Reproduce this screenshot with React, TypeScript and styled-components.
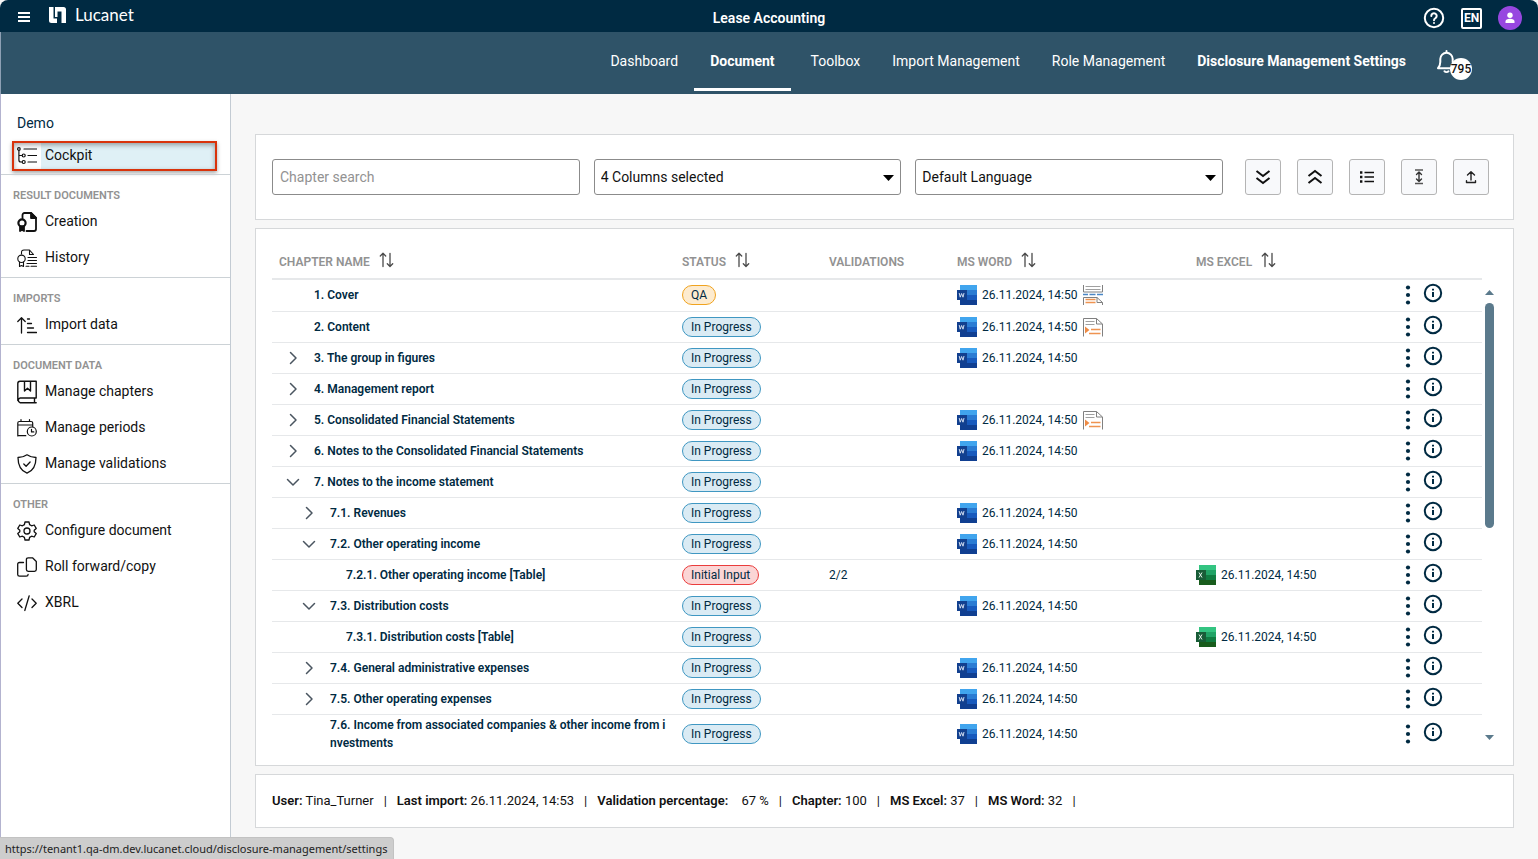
import React from "react";
import styled, { createGlobalStyle } from "styled-components";

const font = `Roboto, "Liberation Sans", sans-serif`;
const navy = "#002a42";

const GlobalStyle = createGlobalStyle`
  *, *::before, *::after { box-sizing: border-box; }
  body { margin: 0; background: #f7f7f7; font-family: ${font}; font-size: 14px; line-height: 20px; color: #111; }
  button, input, select { font: inherit; color: inherit; }
  button { cursor: pointer; padding: 0; border: 0; background: none; }
  svg { display: block; flex: none; }
`;

const Page = styled.div`
  min-height: 100vh;
  display: flex;
  flex-direction: column;
`;

const TopBar = styled.header`
  height: 32px;
  flex: none;
  display: grid;
  grid-template-columns: 1fr auto 1fr;
  align-items: center;
  padding: 0 16px;
  background: ${navy};
  color: #fff;
  border-radius: 8px 8px 0 0;
`;

const Brand = styled.div`
  display: flex;
  align-items: center;
  gap: 16px;
  button { padding-top: 2px; }
`;

const Wordmark = styled.a`
  display: flex;
  align-items: center;
  gap: 9px;
  padding-bottom: 2px;
  color: #fff;
  text-decoration: none;
  font-family: Lato, ${font};
  font-size: 17px;
`;

const AppTitle = styled.h1`
  margin: 0;
  padding-top: 4px;
  font-size: 14px;
  font-weight: 600;
`;

const TopActions = styled.div`
  display: flex;
  justify-content: flex-end;
  align-items: center;
  gap: 16px;
  padding-top: 4px;
`;

const IconButton = styled.button`
  display: flex;
  align-items: center;
  justify-content: center;
`;

const Language = styled.button`
  display: flex;
  align-items: center;
  justify-content: center;
  width: 21px;
  height: 21px;
  border: 2px solid #fff;
  border-radius: 2px;
  font-size: 12px;
  line-height: 17px;
  font-weight: 700;
`;

const Avatar = styled.button`
  display: flex;
  align-items: center;
  justify-content: center;
  width: 24px;
  height: 24px;
  border-radius: 50%;
  background: #9747e0;
`;

const NavBar = styled.nav`
  height: 62px;
  flex: none;
  display: flex;
  justify-content: flex-end;
  padding-right: 66px;
  background: #2f5368;
  border-left: 1px solid #8ea0b4;
`;

const NavLink = styled.a<{ $active?: boolean; $strong?: boolean }>`
  height: 59px;
  padding: 19px 16px 0;
  margin-right: ${(p) => (p.$active ? "4px" : "0")};
  color: #fff;
  text-decoration: none;
  font-weight: ${(p) => (p.$active || p.$strong ? 700 : 400)};
  border-bottom: 3px solid ${(p) => (p.$active ? "#fff" : "transparent")};
`;

const Bell = styled.button`
  position: relative;
  width: 36px;
  margin-left: 14px;
  color: #fff;
  svg { position: absolute; left: 0; top: 18px; }
`;

const BellCount = styled.span`
  position: absolute;
  right: 0;
  top: 26px;
  width: 22px;
  height: 22px;
  border-radius: 50%;
  background: #fff;
  color: #111;
  font-size: 12px;
  line-height: 22px;
  font-weight: 500;
  display: flex;
  justify-content: center;
`;

const Body = styled.div`
  flex: 1;
  display: flex;
`;

const Sidebar = styled.aside`
  width: 231px;
  flex: none;
  background: #fff;
  border-left: 1px solid #b3b3cf;
  border-right: 1px solid #c3cbd3;
`;

const Tenant = styled.div`
  padding: 19px 16px 8px;
  color: ${navy};
`;

const CockpitLink = styled.a`
  display: flex;
  align-items: center;
  height: 30px;
  margin: 0 13px 3px 11px;
  border: 2px solid #d9330b;
  color: #111;
  text-decoration: none;
  box-shadow: 0 2px 4px rgba(0, 0, 0, 0.35), inset 0 2px 5px rgba(0, 0, 0, 0.35);
  background: linear-gradient(to right, #fff 27px, #dff0f6 27px);
  gap: 8px;
  padding: 0 3px;
  span { padding-bottom: 2px; }
`;

const Section = styled.section`
  border-top: 1px solid #ccd2d6;
  padding-bottom: 1px;
`;

const SectionTitle = styled.h2`
  margin: 0;
  padding: 14px 12px 1px;
  font-size: 11px;
  line-height: 14px;
  font-weight: 600;
  color: #929292;
`;

const SideLink = styled.a`
  display: flex;
  align-items: center;
  gap: 8px;
  height: 36px;
  padding: 0 16px;
  color: #111;
  text-decoration: none;
  span { padding-bottom: 2px; }
`;

const Main = styled.main`
  flex: 1;
  min-width: 0;
  display: flex;
  flex-direction: column;
  gap: 8px;
  padding: 40px 24px 32px;
`;

const Panel = styled.section`
  background: #fff;
  border: 1px solid #d6d8da;
`;

const Filters = styled(Panel)`
  display: flex;
  gap: 14px;
  padding: 24px 24px 24px 16px;
`;

const Field = styled.div`
  position: relative;
  flex: 1;
  min-width: 0;
  svg { position: absolute; right: 7px; top: 16px; pointer-events: none; }
`;

const SearchInput = styled.input`
  display: block;
  width: 100%;
  height: 36px;
  padding: 0 7px;
  border: 1px solid #8b8b8b;
  border-radius: 3px;
  background: #fff;
  &::placeholder { color: #929292; opacity: 1; }
`;

const Select = styled.select`
  appearance: none;
  display: block;
  width: 100%;
  height: 36px;
  padding: 0 24px 0 6px;
  border: 1px solid #8b8b8b;
  border-radius: 3px;
  background: #fff;
`;

const Tools = styled.div`
  display: flex;
  gap: 16px;
  margin-left: 8px;
`;

const ToolButton = styled.button`
  display: flex;
  align-items: center;
  justify-content: center;
  width: 36px;
  height: 36px;
  border: 1px solid #b4b4b4;
  border-radius: 3px;
  background: #f8f9fb;
`;

const TablePanel = styled(Panel)`
  display: flex;
  padding: 16px 16px 13px;
`;

const Table = styled.table`
  flex: 1;
  width: 100%;
  min-width: 0;
  table-layout: fixed;
  border-collapse: separate;
  border-spacing: 0;
  font-size: 12px;
  line-height: 18px;
  color: ${navy};
`;

const Col = styled.col<{ $width?: string }>`
  width: ${(p) => p.$width ?? "auto"};
`;

const Th = styled.th`
  height: 35px;
  padding: 0 7px;
  border-bottom: 2px solid #e6e8ea;
  text-align: left;
  font-weight: 600;
  color: #929292;
`;

const HeadLabel = styled.div`
  display: flex;
  align-items: center;
  gap: 9px;
  height: 33px;
  padding-bottom: 4px;
  span { padding-top: 4px; }
`;

const Td = styled.td`
  height: 31px;
  padding: 0 7px;
  border-bottom: 1px solid #e6e8ea;
  vertical-align: middle;
`;

const Row = styled.tr`
  &:first-child td { height: 32px; padding-bottom: 1px; }
  &:last-child td { border-bottom: 0; height: 37px; }
`;

const NameCell = styled.div<{ $level: number }>`
  display: flex;
  align-items: center;
  gap: 8px;
  padding-left: ${(p) => 1 + p.$level * 16}px;
  font-weight: 600;
  word-break: break-all;
`;

const Toggle = styled.span`
  display: flex;
  justify-content: center;
  width: 26px;
  flex: none;
  button { display: block; }
`;

type Status = "QA" | "In Progress" | "Initial Input";

const pillColors: Record<Status, [string, string]> = {
  QA: ["#fdebcf", "#f0a31f"],
  "In Progress": ["#daebf4", "#3f97c2"],
  "Initial Input": ["#fbd5d5", "#ea3c3c"],
};

const Pill = styled.span<{ $status: Status }>`
  display: block;
  width: fit-content;
  height: 20px;
  padding: 0 8px;
  border: 1px solid ${(p) => pillColors[p.$status][1]};
  border-radius: 10px;
  background: ${(p) => pillColors[p.$status][0]};
`;

const FileCell = styled.div`
  display: flex;
  align-items: center;
  gap: 5px;
  white-space: nowrap;
`;

const RowActions = styled.div`
  display: flex;
  align-items: center;
  gap: 12px;
  button:last-child { padding-bottom: 4px; }
`;

const Scrollbar = styled.div`
  width: 15px;
  flex: none;
  display: flex;
  flex-direction: column;
  align-items: center;
  padding: 45px 0 12px;
`;

const Track = styled.div`
  flex: 1;
  width: 9px;
  margin: 8px 0;
`;

const Thumb = styled.div`
  height: 53%;
  border-radius: 5px;
  background: #5b7a8c;
`;

const Summary = styled(Panel)`
  display: flex;
  padding: 16px;
  gap: 10px;
  font-size: 13px;
  b { font-weight: 600; }
`;

const WideLabel = styled.b`
  margin-right: 10px;
`;

const UrlHint = styled.div`
  position: fixed;
  left: 0;
  bottom: 0;
  height: 22px;
  padding: 0 6px 0 5px;
  background: #cdcdcd;
  border-top: 1px solid #c2c2c2;
  border-right: 1px solid #c2c2c2;
  border-radius: 0 4px 0 0;
  font-family: "Noto Sans", sans-serif;
  font-size: 11px;
  line-height: 21px;
  color: #222;
`;

type SvgProps = { w?: number; h?: number; sw?: number; children: React.ReactNode };

const Svg = ({ w = 20, h = 20, sw = 1, children }: SvgProps) => (
  <svg
    width={w}
    height={h}
    viewBox={`0 0 ${w} ${h}`}
    fill="none"
    stroke="currentColor"
    strokeWidth={sw}
    strokeLinecap="round"
    strokeLinejoin="round"
    aria-hidden="true"
  >
    {children}
  </svg>
);

const MenuIcon = () => (
  <Svg w={16} h={16} sw={2}>
    <path d="M2 4h12M2 8h12M2 12h12" strokeLinecap="butt" />
  </Svg>
);

const LogoMark = () => (
  <svg width="18" height="16" viewBox="0 0 18 16" fill="#fff" aria-hidden="true">
    <path d="M1 0h4.500v11.500H9V16H3.500A2.500 2.500 0 0 1 1 13.500z" />
    <path d="M7 0h8.500A2.500 2.500 0 0 1 18 2.500V16h-4.500V4.500H9.500V10H7z" />
  </svg>
);

const HelpIcon = () => (
  <Svg w={22} h={22} sw={2}>
    <circle cx="11" cy="11" r="9.2" />
    <path d="M8.300 9a2.700 2.700 0 1 1 4.200 2.200c-1 .7-1.500 1-1.500 2" />
    <path d="M11 16v.1" />
  </Svg>
);

const PersonIcon = () => (
  <svg width="12" height="12" viewBox="0 0 12 12" fill="#fff" aria-hidden="true">
    <circle cx="6" cy="3.2" r="2.7" />
    <path d="M1.5 11V9.6C1.5 7.8 3.4 6.8 6 6.8s4.5 1 4.5 2.8V11z" />
  </svg>
);

const BellIcon = () => (
  <Svg w={22} h={24} sw={2}>
    <path d="M10.5 1v1.500M2 18.200c1.600-1.800 2.300-3.200 2.300-6.200V9a6.200 6.200 0 0 1 12.400 0v3c0 3 .7 4.400 2.300 6.200z" />
    <path d="M8.500 21.300c1 1 3 1 4 0" />
  </Svg>
);

const TreeIcon = () => (
  <Svg sw={1.2}>
    <circle cx="1.9" cy="3" r="1.3" />
    <circle cx="6.7" cy="9.5" r="1.5" />
    <circle cx="6.7" cy="16" r="1.5" />
    <path d="M1.900 4.500V14c0 1.400.6 2 2 2h1M1.900 9.500h3M7 3h12.500M11 9.500h8.500M11 16h8.500" />
  </Svg>
);

const CreationIcon = () => (
  <Svg sw={1.8}>
    <path d="M5.500 6V3c0-1.200.8-2 2-2h6.500l5 5v11c0 1.200-.8 2-2 2H9.500" />
    <path d="M14 1l5 5h-5z" fill="currentColor" />
    <circle cx="5" cy="11" r="3.6" strokeWidth="2.2" />
    <path d="M3 14.500h4V19l-2-1.300L3 19z" fill="currentColor" />
  </Svg>
);

const HistoryIcon = () => (
  <Svg sw={1.1}>
    <path d="M4.500 6V4.500c0-1.800.7-2.500 2.500-2.500h5.500l4 4.500h-4V2" />
    <circle cx="4.5" cy="10.8" r="3.7" />
    <path d="M2.500 14v4.500l2-1 2 1V14M11 9.500h8.500M11 12.500h8.500M10 15.500h9.500M9 18.200h3M14 18.200h5.500" />
  </Svg>
);

const ImportIcon = () => (
  <Svg sw={1.3}>
    <path d="M4.500 18V3M.8 6.500L4.500 2.800l3.700 3.700M10.500 4h2M10.500 8.500h4M10.500 13h6M10.500 17.500h9" />
  </Svg>
);

const BookIcon = () => (
  <Svg w={20} h={24} sw={1.4}>
    <path d="M.8 20.500V3.500c0-1.500.7-2.200 2.200-2.200h16.200V18H3.200a2.400 2.400 0 0 0 0 4.700h16M17.500 18.200v4.300M7.500 1.500v9.500l3-2.800 3 2.800V1.500" />
  </Svg>
);

const CalendarIcon = () => (
  <Svg sw={1.2}>
    <path d="M.8 18V5c0-1 .5-1.500 1.500-1.500h11.900c1 0 1.500.5 1.500 1.500v3.500M.8 7h15M4 3.500v-2M12.500 3.500v-2M.8 17.700h8" />
    <circle cx="14.8" cy="13.500" r="4.5" />
    <path d="M14.500 11.300v2.600h2.300" />
  </Svg>
);

const ShieldIcon = () => (
  <Svg sw={1.3}>
    <path d="M10 .8c2.800 2 5.500 2.700 9 2.700 0 7.500-2 13-9 15.700C3 16.500 1 11 1 3.500 4.500 3.500 7.200 2.800 10 .8z" />
    <path d="M6.800 10l2.300 2.200 4-4.200" />
  </Svg>
);

const GearIcon = () => (
  <Svg sw={1.3}>
    <circle cx="10" cy="10" r="3" />
    <path d="M8 1h4l.6 2.600 2 1.200 2.600-.8 2 3.400-2 1.800v1.600l2 1.800-2 3.400-2.600-.8-2 1.200L12 19H8l-.6-2.600-2-1.200-2.600.8-2-3.400 2-1.800V9.200l-2-1.800 2-3.400 2.600.8 2-1.200z" />
  </Svg>
);

const CopyIcon = () => (
  <Svg sw={1.3}>
    <path d="M11.200.8h4.300L19.300 4.500v8c0 1.200-.6 1.800-1.800 1.800h-6.300c-1.200 0-1.800-.6-1.800-1.800V2.600c0-1.200.6-1.800 1.800-1.800z" />
    <path d="M6.500 5.500h-4C1.300 5.500.7 6.100.7 7.300v10.100c0 1.200.6 1.800 1.800 1.800h6.800c1.200 0 1.800-.6 1.800-1.800" />
  </Svg>
);

const CodeIcon = () => (
  <Svg sw={1.3}>
    <path d="M5 6L.8 10.200 5 14.500M15 6l4.200 4.200L15 14.500M12.200 2.800L7.800 17.500" />
  </Svg>
);

const Caret = () => (
  <svg width="11" height="6" viewBox="0 0 11 6" fill="#000" aria-hidden="true">
    <path d="M0 0h11L5.500 6z" />
  </svg>
);

const SortIcon = () => (
  <Svg w={15} h={16} sw={1.3}>
    <path
      d="M4 14.500V1.500M1.300 4L4 1.300 6.700 4M11 1.300v13M8.300 11.800l2.700 2.700 2.700-2.700"
      stroke="#4a4a4a"
    />
  </Svg>
);

const ChevronIcon = ({ open }: { open: boolean }) => (
  <Svg w={14} h={14} sw={1.5}>
    <path d={open ? "M1.500 4.500L7 10l5.500-5.500" : "M4.500 1.500L10 7l-5.500 5.500"} stroke="#4a5560" />
  </Svg>
);

const WordIcon = () => (
  <svg width="20" height="20" viewBox="0 0 20 20" aria-hidden="true">
    <path d="M3 0h17v5H3z" fill="#41a5ee" />
    <path d="M3 5h17v5H3z" fill="#2b7cd3" />
    <path d="M3 10h17v5H3z" fill="#185abd" />
    <path d="M3 15h17v5H3z" fill="#103f91" />
    <path d="M0 5h10v10H0z" fill="#12408f" />
    <path d="M2.200 8l1 4.200 1.400-3.700 1.400 3.700 1-4.200" fill="none" stroke="#dfe8f6" strokeWidth=".9" />
  </svg>
);

const ExcelIcon = () => (
  <svg width="20" height="20" viewBox="0 0 20 20" aria-hidden="true">
    <path d="M3 0h17v5H3z" fill="#33c481" />
    <path d="M3 5h17v5H3z" fill="#21a366" />
    <path d="M3 10h17v5H3z" fill="#107c41" />
    <path d="M3 15h17v5H3z" fill="#185c1c" />
    <path d="M0 5h10v10H0z" fill="#185c37" />
    <path d="M3 7.500l3 5M6 7.500l-3 5" stroke="#e4f3ea" strokeWidth="1" />
  </svg>
);

const SplitPageIcon = () => (
  <svg width="20" height="20" viewBox="0 0 20 20" fill="none" aria-hidden="true">
    <path d="M.5 0v7h19V0M.5 20v-7.500h13.500l5.500 5V20M14 12.500v5h5.500" stroke="#808080" />
    <path d="M2.500 1.500h15M2.500 4.500h15" stroke="#a0a0a0" />
    <path d="M0 9.500h5M6.500 9.500h6M14 9.500h6" stroke="#4a86c5" strokeWidth="1.4" />
    <path d="M2.500 14.500h10M2.500 17.500h10" stroke="#ef9350" strokeWidth="1.4" />
  </svg>
);

const PageIcon = () => (
  <svg width="20" height="20" viewBox="0 0 20 20" fill="none" aria-hidden="true">
    <path d="M.5 19.500V1.500h13l6 5.500v12.500M13.500 1.500V7h6" stroke="#808080" />
    <path d="M2.500 4.500h9M2.500 7.500h9" stroke="#a0a0a0" />
    <path d="M2 9.500l4.500 3.500L2 16.500z" fill="#ee8b45" />
    <path d="M8 12.500h9.500M6 16.500h11.500" stroke="#ef9350" strokeWidth="1.4" />
  </svg>
);

const DotsIcon = () => (
  <svg width="6" height="20" viewBox="0 0 6 20" fill={navy} aria-hidden="true">
    <circle cx="3" cy="2.5" r="2.1" />
    <circle cx="3" cy="10" r="2.1" />
    <circle cx="3" cy="17.5" r="2.1" />
  </svg>
);

const InfoIcon = () => (
  <Svg w={20} h={20} sw={2}>
    <circle cx="10" cy="10" r="8.2" />
    <path d="M10 9v5M10 5.800v1.700" strokeLinecap="butt" />
  </Svg>
);

const ExpandAllIcon = () => (
  <Svg w={18} h={18} sw={2}>
    <path d="M2.500 3l6.500 5 6.500-5M2.500 10l6.500 5 6.500-5" strokeLinecap="butt" strokeLinejoin="miter" />
  </Svg>
);

const CollapseAllIcon = () => (
  <Svg w={18} h={18} sw={2}>
    <path d="M2.500 8L9 3l6.500 5M2.500 15L9 10l6.500 5" strokeLinecap="butt" strokeLinejoin="miter" />
  </Svg>
);

const ListIcon = () => (
  <Svg w={18} h={18} sw={1.6}>
    <path d="M6.500 4.500H16M6.500 9H16M6.500 13.500H16" strokeLinecap="butt" />
    <path d="M2 4.500h2.400M2 9h2.400M2 13.500h2.400" strokeLinecap="butt" strokeWidth="2.4" />
  </Svg>
);

const FitHeightIcon = () => (
  <Svg w={18} h={18} sw={1.4}>
    <path d="M5 2h8M5 15.500h8" stroke="#555" strokeLinecap="butt" />
    <path d="M9 4.500v8.500M6.500 6.500L9 4l2.500 2.500M6.500 11L9 13.500l2.500-2.500" stroke="#333" />
  </Svg>
);

const UploadIcon = () => (
  <Svg w={18} h={18} sw={1.4}>
    <path d="M9 12V4M5.500 7L9 3.700 12.500 7M4.500 12.800v1.700h9v-1.700" stroke="#222" />
  </Svg>
);

const UpArrow = () => (
  <svg width="9" height="5" viewBox="0 0 9 5" fill="#5b7a8c" aria-hidden="true">
    <path d="M0 5h9L4.500 0z" />
  </svg>
);

const DownArrow = () => (
  <svg width="9" height="5" viewBox="0 0 9 5" fill="#5b7a8c" aria-hidden="true">
    <path d="M0 0h9L4.500 5z" />
  </svg>
);

type Chapter = {
  name: string;
  level?: number;
  open?: boolean;
  status?: Status;
  validations?: string;
  word?: boolean;
  excel?: boolean;
  page?: "page" | "split";
};

const stamp = "26.11.2024, 14:50";

const chapters: Chapter[] = [
  { name: "1. Cover", status: "QA", word: true, page: "split" },
  { name: "2. Content", word: true, page: "page" },
  { name: "3. The group in figures", open: false, word: true },
  { name: "4. Management report", open: false },
  { name: "5. Consolidated Financial Statements", open: false, word: true, page: "page" },
  { name: "6. Notes to the Consolidated Financial Statements", open: false, word: true },
  { name: "7. Notes to the income statement", open: true },
  { name: "7.1. Revenues", level: 1, open: false, word: true },
  { name: "7.2. Other operating income", level: 1, open: true, word: true },
  { name: "7.2.1. Other operating income [Table]", level: 2, status: "Initial Input", validations: "2/2", excel: true },
  { name: "7.3. Distribution costs", level: 1, open: true, word: true },
  { name: "7.3.1. Distribution costs [Table]", level: 2, excel: true },
  { name: "7.4. General administrative expenses", level: 1, open: false, word: true },
  { name: "7.5. Other operating expenses", level: 1, open: false, word: true },
  { name: "7.6. Income from associated companies & other income from investments", level: 1, word: true },
];

const sections = [
  { title: "RESULT DOCUMENTS", items: [["Creation", CreationIcon], ["History", HistoryIcon]] },
  { title: "IMPORTS", items: [["Import data", ImportIcon]] },
  {
    title: "DOCUMENT DATA",
    items: [["Manage chapters", BookIcon], ["Manage periods", CalendarIcon], ["Manage validations", ShieldIcon]],
  },
  {
    title: "OTHER",
    items: [["Configure document", GearIcon], ["Roll forward/copy", CopyIcon], ["XBRL", CodeIcon]],
  },
] as { title: string; items: [string, React.ComponentType][] }[];

const navItems = [
  { label: "Dashboard" },
  { label: "Document", active: true },
  { label: "Toolbox" },
  { label: "Import Management" },
  { label: "Role Management" },
  { label: "Disclosure Management Settings", strong: true },
];

const tools: [string, React.ComponentType][] = [
  ["Expand all", ExpandAllIcon],
  ["Collapse all", CollapseAllIcon],
  ["List view", ListIcon],
  ["Row height", FitHeightIcon],
  ["Upload", UploadIcon],
];

const columns: { label: string; sortable?: boolean }[] = [
  { label: "CHAPTER NAME", sortable: true },
  { label: "STATUS", sortable: true },
  { label: "VALIDATIONS" },
  { label: "MS WORD", sortable: true },
  { label: "MS EXCEL", sortable: true },
];

const ChapterRow = ({ chapter }: { chapter: Chapter }) => {
  const { name, level = 0, open, status = "In Progress", validations, word, excel, page } = chapter;
  return (
    <Row>
      <Td>
        <NameCell $level={level}>
          <Toggle>
            {open !== undefined && (
              <button type="button" aria-expanded={open} aria-label={name}>
                <ChevronIcon open={open} />
              </button>
            )}
          </Toggle>
          <span>{name}</span>
        </NameCell>
      </Td>
      <Td>
        <Pill $status={status}>{status}</Pill>
      </Td>
      <Td>{validations}</Td>
      <Td>
        {word && (
          <FileCell>
            <WordIcon />
            {stamp}
            {page === "split" && <SplitPageIcon />}
            {page === "page" && <PageIcon />}
          </FileCell>
        )}
      </Td>
      <Td>
        {excel && (
          <FileCell>
            <ExcelIcon />
            {stamp}
          </FileCell>
        )}
      </Td>
      <Td>
        <RowActions>
          <IconButton type="button" aria-label="More">
            <DotsIcon />
          </IconButton>
          <IconButton type="button" aria-label="Details">
            <InfoIcon />
          </IconButton>
        </RowActions>
      </Td>
    </Row>
  );
};

export default function App() {
  return (
    <Page>
      <GlobalStyle />
      <TopBar>
        <Brand>
          <IconButton type="button" aria-label="Menu">
            <MenuIcon />
          </IconButton>
          <Wordmark href="#">
            <LogoMark />
            Lucanet
          </Wordmark>
        </Brand>
        <AppTitle>Lease Accounting</AppTitle>
        <TopActions>
          <IconButton type="button" aria-label="Help">
            <HelpIcon />
          </IconButton>
          <Language type="button">EN</Language>
          <Avatar type="button" aria-label="Account">
            <PersonIcon />
          </Avatar>
        </TopActions>
      </TopBar>
      <NavBar>
        {navItems.map((item) => (
          <NavLink key={item.label} href="#" $active={item.active} $strong={item.strong}>
            {item.label}
          </NavLink>
        ))}
        <Bell type="button" aria-label="Notifications">
          <BellIcon />
          <BellCount>795</BellCount>
        </Bell>
      </NavBar>
      <Body>
        <Sidebar>
          <Tenant>Demo</Tenant>
          <CockpitLink href="#">
            <TreeIcon />
            <span>Cockpit</span>
          </CockpitLink>
          {sections.map((section) => (
            <Section key={section.title}>
              <SectionTitle>{section.title}</SectionTitle>
              {section.items.map(([label, Icon]) => (
                <SideLink key={label} href="#">
                  <Icon />
                  <span>{label}</span>
                </SideLink>
              ))}
            </Section>
          ))}
        </Sidebar>
        <Main>
          <Filters>
            <Field>
              <SearchInput type="search" placeholder="Chapter search" aria-label="Chapter search" />
            </Field>
            <Field>
              <Select aria-label="Columns">
                <option>4 Columns selected</option>
              </Select>
              <Caret />
            </Field>
            <Field>
              <Select aria-label="Language">
                <option>Default Language</option>
              </Select>
              <Caret />
            </Field>
            <Tools>
              {tools.map(([label, Icon]) => (
                <ToolButton key={label} type="button" aria-label={label}>
                  <Icon />
                </ToolButton>
              ))}
            </Tools>
          </Filters>
          <TablePanel>
            <Table>
              <colgroup>
                <Col $width="403px" />
                <Col $width="147px" />
                <Col $width="128px" />
                <Col $width="239px" />
                <Col />
                <Col $width="84px" />
              </colgroup>
              <thead>
                <tr>
                  {columns.map((column) => (
                    <Th key={column.label} scope="col">
                      <HeadLabel>
                        <span>{column.label}</span>
                        {column.sortable && <SortIcon />}
                      </HeadLabel>
                    </Th>
                  ))}
                  <Th aria-label="Actions" />
                </tr>
              </thead>
              <tbody>
                {chapters.map((chapter) => (
                  <ChapterRow key={chapter.name} chapter={chapter} />
                ))}
              </tbody>
            </Table>
            <Scrollbar>
              <UpArrow />
              <Track>
                <Thumb />
              </Track>
              <DownArrow />
            </Scrollbar>
          </TablePanel>
          <Summary>
            <span><b>User:</b> Tina_Turner</span>
            <span>|</span>
            <span><b>Last import:</b> 26.11.2024, 14:53</span>
            <span>|</span>
            <span><WideLabel>Validation percentage:</WideLabel> 67 %</span>
            <span>|</span>
            <span><b>Chapter:</b> 100</span>
            <span>|</span>
            <span><b>MS Excel:</b> 37</span>
            <span>|</span>
            <span><b>MS Word:</b> 32</span>
            <span>|</span>
          </Summary>
        </Main>
      </Body>
      <UrlHint>https://tenant1.qa-dm.dev.lucanet.cloud/disclosure-management/settings</UrlHint>
    </Page>
  );
}
